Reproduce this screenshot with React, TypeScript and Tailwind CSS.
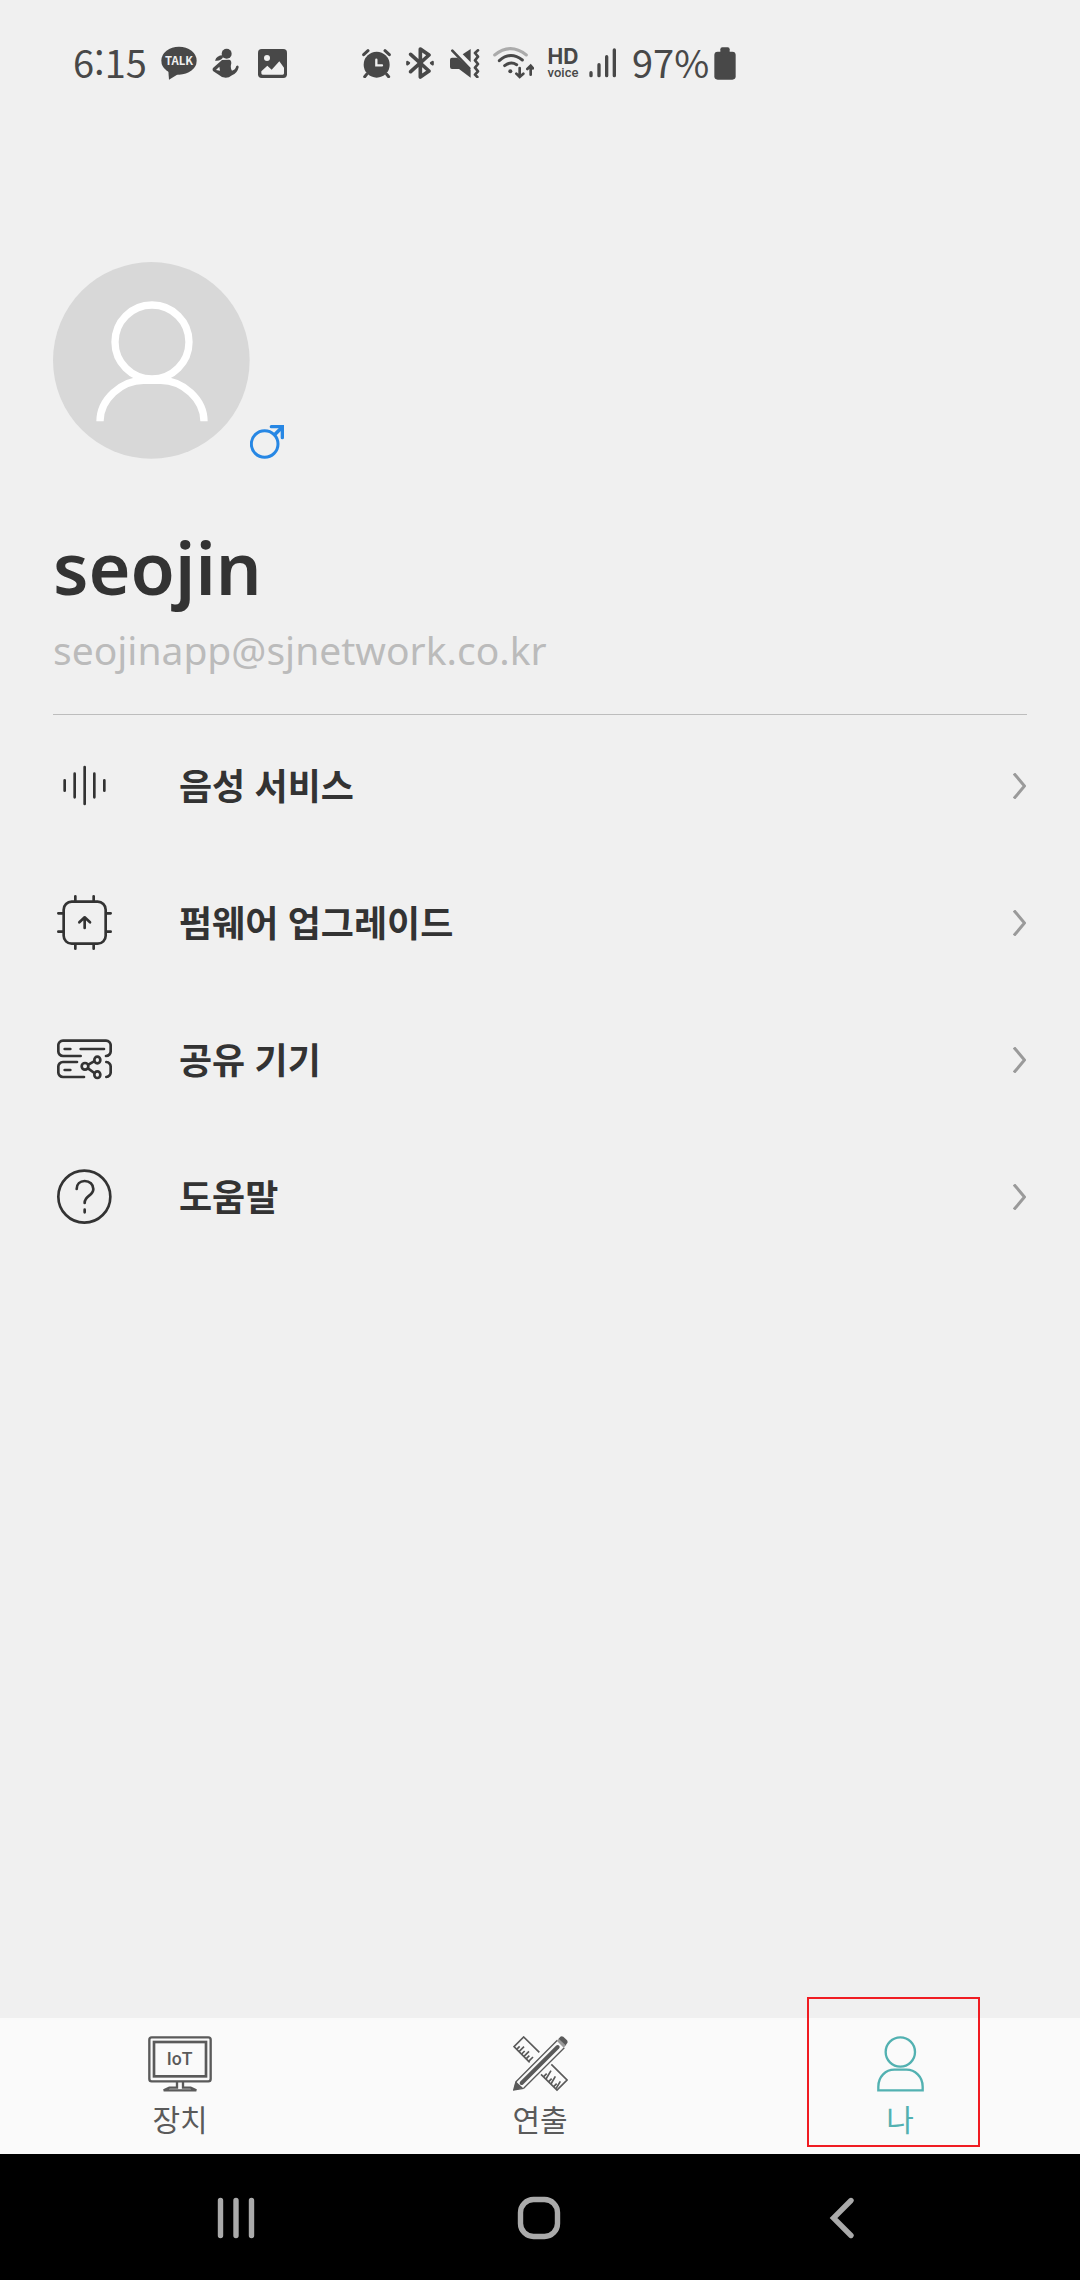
import type { ReactNode } from "react";

const INK = "#484848";

const MENU: { label: string; icon: ReactNode }[] = [
  { label: "음성 서비스", icon: <VoiceIcon /> },
  { label: "펌웨어 업그레이드", icon: <FirmwareIcon /> },
  { label: "공유 기기", icon: <ShareIcon /> },
  { label: "도움말", icon: <HelpIcon /> },
];

function MenuSvg({ children }: { children: ReactNode }) {
  return (
    <svg
      viewBox="0 0 165 165"
      className="h-[55px] w-[55px] shrink-0"
      fill="none"
      stroke="#333"
      strokeWidth="8"
      strokeLinecap="round"
      strokeLinejoin="round"
      aria-hidden="true"
    >
      {children}
    </svg>
  );
}

function VoiceIcon() {
  return (
    <MenuSvg>
      <path d="M23 67V98M53 47V118M83 27V138M112 47V118M142 67V98" />
    </MenuSvg>
  );
}

function FirmwareIcon() {
  return (
    <MenuSvg>
      <rect x="20" y="20" width="126" height="126" rx="24" />
      <path d="M55 4V17M110 4V17M55 149V161M110 149V161M4 55H17M4 110H17M149 55H161M149 110H161" />
      <path d="M83 99V67M67 82L83 67L99 82" />
    </MenuSvg>
  );
}

function ShareIcon() {
  return (
    <MenuSvg>
      <path d="M71 72H18a14 14 0 0 1-14-15V41a14 14 0 0 1 14-15H147a14 14 0 0 1 14 15V57a14 14 0 0 1-14 15" />
      <path d="M60 90H18a14 14 0 0 0-14 15V120a14 14 0 0 0 14 15H81M148 90a14 14 0 0 1 13 15V120a14 14 0 0 1-13 15" />
      <path d="M23 51H40M71 51H141M23 114H40" />
      <circle cx="84" cy="103" r="10" />
      <ellipse cx="121" cy="84" rx="9" ry="10" />
      <ellipse cx="121" cy="128" rx="9" ry="10" />
      <path d="M94 98L111 88M93 109L112 123" />
    </MenuSvg>
  );
}

function HelpIcon() {
  return (
    <MenuSvg>
      <circle cx="82" cy="83" r="78" />
      <path d="M59 60C59 45 69 36 83 36C98 36 109 46 109 60C109 82 83 78 83 102M83 122V130" />
    </MenuSvg>
  );
}

function StatusBar() {
  return (
    <header className="flex h-[126px] shrink-0 items-center pl-[73px] text-[#484848]">
      <span className="w-[88px] pb-[2px] font-['Noto_Sans_CJK_KR'] text-[38px] leading-none">6:15</span>
      <svg viewBox="0 0 108 102" className="h-[34px] w-9" fill={INK}>
        <ellipse cx="54" cy="44" rx="53" ry="42" />
        <path d="M22 74L24 101L52 84Z" />
        <text
          x="54"
          y="57"
          textAnchor="middle"
          fontSize="34"
          fontWeight="700"
          fontFamily="'Noto Sans CJK KR', sans-serif"
          fill="#f0f0f0"
        >
          TALK
        </text>
      </svg>
      <svg viewBox="0 0 81 93" className="ml-[15px] h-[31px] w-[27px]" fill={INK}>
        <circle cx="44" cy="17" r="15" />
        <path d="M32 22C20 22 12 28 9 38C20 40 29 36 33 28Z" />
        <path d="M30 36L3 60Q0 66 4 70L20 80Q40 98 60 82Q76 76 80 58Q80 50 73 54Q70 66 60 68Q54 60 58 46Q58 34 50 35Z" />
        <path d="M12 66L22 56L24 68Z" fill="#f0f0f0" />
      </svg>
      <svg viewBox="0 0 87 87" className="ml-[19px] h-[29px] w-[29px]">
        <rect width="87" height="87" rx="11" fill={INK} />
        <circle cx="27" cy="27" r="9" fill="#f0f0f0" />
        <path d="M10 67L28 50L41 62L64 37L78 56V73Q78 77 74 77H14Q10 77 10 73Z" fill="#f0f0f0" />
      </svg>
      <svg viewBox="0 0 87 87" className="ml-[75px] h-[29px] w-[29px]" stroke={INK} strokeLinecap="round">
        <circle cx="44" cy="47" r="39" fill={INK} stroke="none" />
        <path d="M5 17L18 5M69 5L82 17M14 76L8 83M74 76L80 83" strokeWidth="9" />
        <path d="M43 32V49H60" fill="none" stroke="#f0f0f0" strokeWidth="7" />
      </svg>
      <svg
        viewBox="0 0 84 96"
        className="ml-[15px] h-8 w-7"
        fill="none"
        stroke={INK}
        strokeWidth="11"
        strokeLinejoin="round"
        strokeLinecap="round"
      >
        <path d="M14 22L69 72L43 90V6L69 24L14 74" />
        <path d="M4 45L9 48L4 52ZM80 45L75 48L80 52Z" strokeWidth="7" />
      </svg>
      <svg viewBox="0 0 90 87" className="ml-4 h-[29px] w-[30px]" fill={INK}>
        <path d="M6 26H22L62 62V86L27 60H6Q0 60 0 54V32Q0 26 6 26Z" />
        <path d="M38 16L62 0V40Z" />
        <path d="M7 5L58 58" stroke={INK} strokeWidth="8" strokeLinecap="round" />
        <path
          d="M84 4L75 12L84 23L75 34L84 45L75 56L84 67L75 77L82 84"
          fill="none"
          stroke={INK}
          strokeWidth="8"
          strokeLinejoin="round"
          strokeLinecap="round"
        />
      </svg>
      <svg
        viewBox="0 0 123 96"
        className="ml-[13px] h-8 w-[41px]"
        fill="none"
        stroke={INK}
        strokeWidth="9"
        strokeLinecap="round"
      >
        <path d="M5 24Q52 -14 100 24" stroke="#ababab" />
        <path d="M19 41Q52 11 88 39" />
        <path d="M35 56Q53 42 71 53" />
        <circle cx="52" cy="73" r="6" fill={INK} stroke="none" />
        <path d="M80 63V89M70 80L80 90L91 80M113 83V57M103 66L113 56L120 64" strokeWidth="8" />
      </svg>
      <div className="ml-[13px] flex w-8 flex-col items-center pt-[2px]">
        <span className="font-[Inter] text-[21px] leading-[18px] font-bold">HD</span>
        <span className="font-[Roboto] text-[13px] leading-[14px] font-medium">voice</span>
      </div>
      <svg
        viewBox="0 0 84 90"
        className="ml-[10px] h-[30px] w-7"
        stroke={INK}
        strokeWidth="10"
        strokeLinecap="round"
      >
        <path d="M6 74V83M30 50V83M53 26V83M76 6V83" />
      </svg>
      <span className="ml-[15px] w-[82px] pb-[2px] font-['Noto_Sans_CJK_KR'] text-[38px] leading-none">97%</span>
      <svg viewBox="0 0 66 99" className="h-[33px] w-[22px]" fill={INK}>
        <rect x="1" y="14" width="64" height="84" rx="10" />
        <rect x="19" y="1" width="28" height="24" rx="6" />
      </svg>
    </header>
  );
}

function Profile() {
  return (
    <section className="border-b border-[#bdbdbd] pt-[136px] pb-[34px]">
      <div className="flex items-end">
        <svg viewBox="0 0 591 591" className="h-[197px] w-[197px]" fill="none" stroke="#fff" strokeWidth="22">
          <circle cx="295" cy="295" r="295" fill="#d8d8d8" stroke="none" />
          <circle cx="297" cy="240" r="111" />
          <path d="M141 478C141 412 205 355 272 355H323C390 355 453 412 453 478" />
        </svg>
        <svg
          viewBox="0 0 102 102"
          className="h-[34px] w-[34px]"
          fill="none"
          stroke="#2787e4"
          strokeWidth="9"
          role="img"
          aria-label="남성"
        >
          <circle cx="44" cy="57" r="40" />
          <path d="M73 30L94 9" strokeWidth="11" />
          <path d="M64 5H97V38" strokeLinecap="round" strokeWidth="10" />
        </svg>
      </div>
      <h1 className="mt-[63px] text-[72px] leading-[90px] font-semibold text-[#333]">seojin</h1>
      <p className="mt-2 text-[39px] leading-[60px] text-[#bbb]">seojinapp@sjnetwork.co.kr</p>
    </section>
  );
}

function Menu() {
  return (
    <ul className="pt-[2px]">
      {MENU.map((item) => (
        <li key={item.label}>
          <a href="#" className="flex h-[137px] items-center pr-[1px] pl-1">
            {item.icon}
            <span className="ml-[67px] flex-1 pt-[2px] text-[36px] leading-[52px] font-bold text-[#333]">
              {item.label}
            </span>
            <svg
              viewBox="0 0 13 26"
              className="h-[26px] w-[13px]"
              fill="none"
              stroke="#9a9a9a"
              strokeWidth="3"
              aria-hidden="true"
            >
              <path d="M1 0.5L11.5 13L1 25.5" />
            </svg>
          </a>
        </li>
      ))}
    </ul>
  );
}

function DeviceIcon() {
  return (
    <svg viewBox="0 0 192 168" className="h-14 w-16" fill="none" stroke="#5a5a5a" strokeWidth="7">
      <rect x="4" y="4" width="184" height="132" rx="7" />
      <rect x="18" y="18" width="156" height="103" strokeWidth="8" />
      <path d="M87 138V155H64L47 163H145L128 155H105V138" />
      <text
        x="95"
        y="87"
        textAnchor="middle"
        fontSize="53"
        fontWeight="500"
        fontFamily="Roboto, sans-serif"
        fill="#5a5a5a"
        stroke="none"
      >
        IoT
      </text>
    </svg>
  );
}

function SceneIcon() {
  return (
    <svg viewBox="0 0 165 168" className="h-14 w-[55px]" fill="none" stroke="#5a5a5a" strokeWidth="5">
      <path d="M79 49L32 3L3 32L50 79M115 85L162 132L132 162L84 115" />
      <path d="M11 40L20 31M18 47L33 32M26 54L35 45M33 61L48 46M40 68L49 59M47 76L60 63M92 122L101 113M99 129L114 104M107 137L116 128M114 144L127 121M122 152L131 143M129 158L142 136" />
      <path d="M9 137L133 13M32 157L154 35M9 137L2 162L32 157" strokeWidth="4" />
      <path d="M26 141L134 33" strokeWidth="12" strokeLinecap="round" />
      <path d="M2 163L8 136L30 156Z" fill="#5a5a5a" stroke="none" />
      <path d="M131 14L139 6L160 27L152 35Z" fill="#9a9a9a" stroke="none" />
      <path d="M137 8L142 2Q146 -1 151 2L162 13Q165 17 163 21L158 28Z" fill="#5a5a5a" stroke="none" />
    </svg>
  );
}

function MeIcon() {
  return (
    <svg viewBox="0 0 141 168" className="h-14 w-[47px]" fill="none" stroke="#52b1b1" strokeWidth="7">
      <circle cx="70" cy="48" r="44" />
      <path d="M4 163V152C4 122 26 101 52 101H88C114 101 137 122 137 152V163Z" />
    </svg>
  );
}

function TabBar() {
  return (
    <nav className="grid h-[136px] shrink-0 grid-cols-3 bg-[#fafafa] text-[30px] leading-[44px] text-[#5a5a5a]">
      <a href="#" className="flex flex-col items-center pt-[18px]">
        <DeviceIcon />
        <span className="mt-[6px]">장치</span>
      </a>
      <a href="#" className="flex flex-col items-center pt-[18px]">
        <SceneIcon />
        <span className="mt-[6px]">연출</span>
      </a>
      <a href="#" aria-current="page" className="relative flex flex-col items-center pt-[18px] text-[#52b1b1]">
        <MeIcon />
        <span className="mt-[6px]">나</span>
        <span className="absolute -top-[21px] left-[87px] h-[150px] w-[173px] border-2 border-[#f01c22]" />
      </a>
    </nav>
  );
}

function SystemNav() {
  return (
    <div className="grid h-[126px] shrink-0 grid-cols-3 bg-black pt-[2px] pr-[87px] pl-[85px]">
      <button type="button" aria-label="최근 앱" className="flex items-center justify-center">
        <svg viewBox="0 0 38 44" className="h-11 w-[38px]" stroke="#aaa" strokeWidth="5.4" strokeLinecap="round">
          <path d="M3.5 4.5V39.5M19 4.5V39.5M34.5 4.5V39.5" />
        </svg>
      </button>
      <button type="button" aria-label="홈" className="flex items-center justify-center">
        <svg viewBox="0 0 44 44" className="h-11 w-11" fill="none" stroke="#aaa" strokeWidth="5.4">
          <rect x="3.5" y="3.5" width="37" height="37" rx="13" />
        </svg>
      </button>
      <button type="button" aria-label="뒤로" className="flex items-center justify-center">
        <svg
          viewBox="0 0 26 44"
          className="h-11 w-[26px]"
          fill="none"
          stroke="#aaa"
          strokeWidth="5.4"
          strokeLinecap="round"
        >
          <path d="M22 4.5L4.5 22L22 39.5" />
        </svg>
      </button>
    </div>
  );
}

export default function App() {
  return (
    <div
      lang="ko"
      className="flex min-h-screen flex-col bg-[#f0f0f0] font-['Noto_Sans','Noto_Sans_CJK_KR',sans-serif]"
    >
      <StatusBar />
      <main className="flex-1 px-[53px]">
        <Profile />
        <Menu />
      </main>
      <TabBar />
      <SystemNav />
    </div>
  );
}
